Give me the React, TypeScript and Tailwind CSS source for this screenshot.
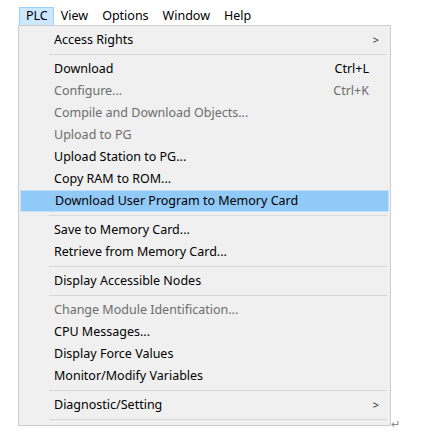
import React from 'react';

type Item =
  | { kind: 'sep' }
  | { kind: 'item'; label: string; shortcut?: string; disabled?: boolean; sub?: boolean; active?: boolean };

const items: Item[] = [
  { kind: 'item', label: 'Access Rights', sub: true },
  { kind: 'sep' },
  { kind: 'item', label: 'Download', shortcut: 'Ctrl+L' },
  { kind: 'item', label: 'Configure...', shortcut: 'Ctrl+K', disabled: true },
  { kind: 'item', label: 'Compile and Download Objects...', disabled: true },
  { kind: 'item', label: 'Upload to PG', disabled: true },
  { kind: 'item', label: 'Upload Station to PG...' },
  { kind: 'item', label: 'Copy RAM to ROM...' },
  { kind: 'item', label: 'Download User Program to Memory Card', active: true },
  { kind: 'sep' },
  { kind: 'item', label: 'Save to Memory Card...' },
  { kind: 'item', label: 'Retrieve from Memory Card...' },
  { kind: 'sep' },
  { kind: 'item', label: 'Display Accessible Nodes' },
  { kind: 'sep' },
  { kind: 'item', label: 'Change Module Identification...', disabled: true },
  { kind: 'item', label: 'CPU Messages...' },
  { kind: 'item', label: 'Display Force Values' },
  { kind: 'item', label: 'Monitor/Modify Variables' },
  { kind: 'sep' },
  { kind: 'item', label: 'Diagnostic/Setting', sub: true },
  { kind: 'sep' },
];

const menuBar = ['PLC', 'View', 'Options', 'Window', 'Help'];

const App = () => {
  return (
    <div className="w-[424px] h-[443px] bg-white font-['Noto_Sans',sans-serif] text-black relative">
      <div className="flex items-stretch h-[18px] mt-[7px] pl-[19px] text-[12.5px]">
        {menuBar.map((name, i) => (
          <div
            key={name}
            className={
              i === 0
                ? 'flex items-center pl-[6px] pr-[5px] bg-[#cce8ff] border border-[#99d1ff] border-b-0'
                : 'flex items-center px-[7px]'
            }
          >
            {name}
          </div>
        ))}
      </div>
      <div className="ml-[18px] w-[373px] bg-[#f0f0f0] border border-[#cccccc] pt-[3px] pb-[2px] text-[12.5px]">
        {items.map((it, i) =>
          it.kind === 'sep' ? (
            <div key={i} className="h-[7px] flex items-center pl-[30px] pr-[3px]">
              <div className="h-px w-full bg-[#d7d7d7]" />
            </div>
          ) : (
            <div
              key={i}
              className={`h-[22px] mx-[1px] flex items-center pl-[34px] pr-[9px] ${
                it.active ? 'bg-[#91c9f7] border border-[#c6e2f9]' : ''
              } ${it.disabled ? 'text-[#6d6d6d]' : 'text-black'}`}
            >
              <span className="flex-1">{it.label}</span>
              {it.shortcut && <span className="mr-[11px]">{it.shortcut}</span>}
              {it.sub && <span className="text-[#333] text-[11px] mr-[1px]">&gt;</span>}
            </div>
          )
        )}
      </div>
      <span className="absolute left-[391px] top-[409px] text-[11px] text-[#888]">↵</span>
    </div>
  );
};

export default App;
